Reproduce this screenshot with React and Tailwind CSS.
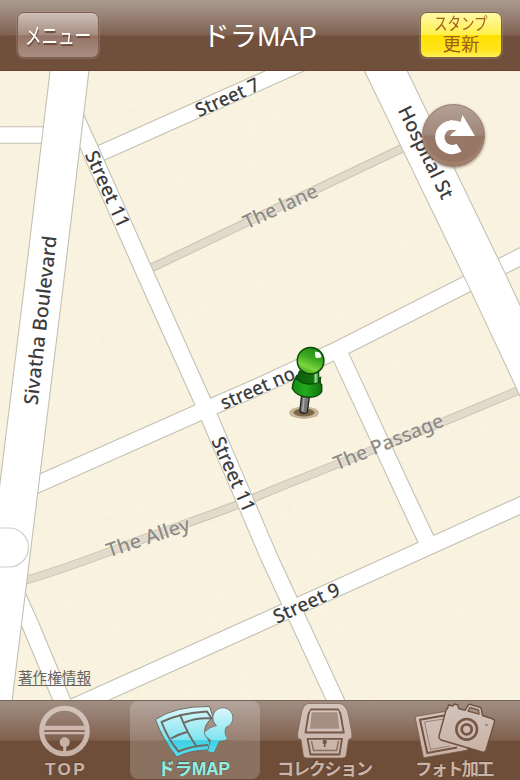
import clsx from 'clsx';

const jp = "font-['Liberation_Sans','Noto_Sans_CJK_JP',sans-serif]";

const ALLEYS = [
  'M148 269.5 L408 145.5',
  'M16 583 Q60 571 140 540 L225 509.5 Q250 500 270 491 L380 447 Q420 432 530 385.5',
];

const STREETS = [
  // side road on the left
  { d: 'M-10 135 H50', w: 16.5 },
  // Street 11
  { d: 'M69 103 L89.5 148 L148 280 L202 400 L240 489 L269 557 L341 712', w: 17 },
  // street no
  { d: 'M20 492 L38 484 L200 412 L262 385 L333 352 L400 318 L462 286.5 L540 247', w: 16.8 },
  { d: 'M335 344 L342.5 360 L407 499 L432 552', w: 17 },
  // Street 9
  { d: 'M60 713 L260 623 L530 501', w: 16.6 },
  { d: 'M4 566 L11 582 L30.5 625 L68 715', w: 17 },
];

const AVENUES = [
  { d: 'M71.4 55 L44.5 280 L-8.5 710', w: 38.5 },
  { d: 'M373.3 45 L487 280 L560 436', w: 38.4 },
];

const LABELS = [
  { text: 'Street 7', x: 199, y: 117.5, angle: -24, len: 68 },
  { text: 'Street 11', x: 84.5, y: 154.5, angle: 65.6, len: 82 },
  { text: 'Sivatha Boulevard', x: 37.5, y: 405.5, angle: -83.5, len: 170 },
  { text: 'The lane', x: 247, y: 229.5, angle: -25, len: 80, muted: true },
  { text: 'Hospital St', x: 397.5, y: 110, angle: 63.8, len: 101 },
  { text: 'street no', x: 224, y: 410, angle: -23.5, len: 79 },
  { text: 'Street 11', x: 211, y: 440.5, angle: 66, len: 80 },
  { text: 'The Alley', x: 109, y: 557.5, angle: -18.5, len: 87, muted: true },
  { text: 'The Passage', x: 337, y: 470.5, angle: -22.5, len: 117, muted: true },
  { text: 'Street 9', x: 277, y: 624, angle: -24.5, len: 71 },
];

const Roads = ({ roads }) => (
  <g fill="none" strokeLinejoin="round">
    {roads.map((r) => (
      <path key={r.d} d={r.d} stroke="#c4c0b3" strokeWidth={r.w + 1.2} />
    ))}
    {roads.map((r) => (
      <path key={r.d} d={r.d} stroke="#fff" strokeWidth={r.w - 1} />
    ))}
  </g>
);

const Pin = () => (
  <g>
    <ellipse cx="304" cy="412.7" rx="14.8" ry="6.2" fill="#c8b59a" />
    <ellipse cx="304" cy="412.5" rx="10.5" ry="4" fill="#7d6548" />
    <path d="M301.5 396 L299.8 411.5 Q303 415 307.2 412.5 L309.5 396 Z" fill="#777" stroke="#222" strokeWidth="1.3" />
    <path d="M304 398 L302.8 411" stroke="#aaa" strokeWidth="1.5" />
    <path d="M297 375.5 Q308 384 320.5 377.5 Q319.5 384 321.7 385 V391.5 Q319 397.3 309 397.2 Q297 397 292.3 388.5 Q292.500 382 297 375.5 Z" fill="url(#pinBody)" stroke="#0b4a09" strokeWidth="1.4" />
    <path d="M299.500 371 L296.500 379 Q306 387 319 382.500 L318.500 370 Z" fill="url(#pinNeck)" stroke="#0b4a09" strokeWidth="1.2" />
    <circle cx="310.6" cy="360.7" r="13.3" fill="url(#pinHead)" stroke="#0b4a09" strokeWidth="1.5" />
    <path d="M315.5 352 L319.5 353 L321 357 L316 357.5 Z" fill="#fff" stroke="#fff" strokeLinejoin="round" />
  </g>
);

const MapView = () => (
  <svg viewBox="0 71 520 629" className="block h-[629px] w-full">
    <defs>
      <linearGradient id="pinHead" x1="0.7" y1="0" x2="0.3" y2="1">
        <stop offset="0" stopColor="#1f8a18" />
        <stop offset="0.4" stopColor="#3fa822" />
        <stop offset="0.75" stopColor="#7bd63a" />
        <stop offset="1" stopColor="#3c9c1e" />
      </linearGradient>
      <linearGradient id="pinBody">
        <stop offset="0" stopColor="#158c14" />
        <stop offset="0.45" stopColor="#23ab1d" />
        <stop offset="1" stopColor="#107310" />
      </linearGradient>
      <linearGradient id="pinNeck">
        <stop offset="0" stopColor="#0f5d0d" />
        <stop offset="0.75" stopColor="#12730f" />
        <stop offset="0.85" stopColor="#a5dc9c" />
        <stop offset="1" stopColor="#157a12" />
      </linearGradient>
      <filter id="paper" x="0" y="0" width="100%" height="100%">
        <feTurbulence type="fractalNoise" baseFrequency="0.14 0.24" numOctaves="2" seed="4" />
        <feColorMatrix values="0 0 0 0 0.74  0 0 0 0 0.66  0 0 0 0 0.38  0.4 0 0 0 -0.13" />
      </filter>
    </defs>
    <rect y="71" width="520" height="629" fill="#f9f3e1" />
    <rect y="71" width="520" height="629" filter="url(#paper)" opacity="0.35" />
    <g fill="none">
      {ALLEYS.map((d) => (
        <path key={d} d={d} stroke="#cbc3b2" strokeWidth="8.8" />
      ))}
      {ALLEYS.map((d) => (
        <path key={d} d={d} stroke="#e2dacb" strokeWidth="6.8" />
      ))}
    </g>
    <Roads roads={[{ d: 'M92 157 L260 82 L330 50.5', w: 16 }]} />
    <Roads roads={STREETS} />
    <Roads roads={AVENUES} />
    <path d="M-5 528 H9 A19.500 19.500 0 0 1 9 567 H-5" fill="#fff" stroke="#cfcdc8" strokeWidth="1.2" />
    <g fontSize="19.5" fontFamily="'Noto Sans', sans-serif" fontWeight="500">
      {LABELS.map((l) => (
        <text
          key={l.text + l.x}
          transform={`translate(${l.x} ${l.y}) rotate(${l.angle})`}
          textLength={l.len}
          lengthAdjust="spacingAndGlyphs"
          fill={l.muted ? '#8d8b86' : '#3d3d3d'}
          stroke={l.muted ? '#faf5e8' : '#fff'}
          strokeWidth="1.6"
          strokeOpacity="0.6"
          paintOrder="stroke"
        >
          {l.text}
        </text>
      ))}
    </g>
    <Pin />
  </svg>
);

const RotateButton = () => (
  <button className="absolute left-[422px] top-[33px] size-[63px] rounded-full border border-[#94796a] bg-linear-to-b from-[#b3a097] via-[#a08778] via-50% to-[#a07e6c] shadow-[0_1px_3px_rgba(90,60,40,0.6)]">
    <svg viewBox="422 104 63 63" className="absolute -left-px -top-px size-[63px]">
      <path d="M423.500 135.500 H484 A30.500 30.500 0 0 1 423.500 135.500" fill="#8a6552" opacity="0.4" />
      <path d="M459 147.500 A12.300 12.300 0 1 1 452 125" fill="none" stroke="#fff" strokeWidth="9.200" />
      <path d="M450 120.300 Q456 120 460.500 122 L462.500 115 L475 136 L450 136 Q453 131 457 130.800 Q453 129 449 130 Z" fill="#fff" />
    </svg>
  </button>
);

const Header = () => (
  <header className="flex h-[71px] items-center justify-between border-b border-[#69402f] bg-[linear-gradient(to_bottom,#a9998f_0,#a18e83_8px,#7f6150_35px,#70503d_36px,#70503b_100%)] pl-[17px] pr-[18px]">
    <button className="flex h-[46px] w-[82px] items-center justify-center rounded-[7px] border border-[#7c5f50] bg-[linear-gradient(to_bottom,#cdc0b9_0,#a58c7f_50%,#947466_52%,#a98f82_100%)] pt-[3px] shadow-[0_0_1px_1px_rgba(190,165,150,0.3)]">
      <span className={clsx(jp, 'scale-x-[0.72] whitespace-nowrap text-[23px] leading-none text-white [text-shadow:1px_2px_1px_#6b4a3a]')}>メニュー</span>
    </button>
    <h1 className={clsx(jp, 'pt-[3px] text-[27.5px] leading-none text-white')}>ドラMAP</h1>
    <button className="flex h-[46px] w-[82px] flex-col items-center justify-center rounded-[7px] border border-[#76653e] bg-[linear-gradient(to_bottom,#fff8a8_0,#fff04e_49%,#ffe100_51%,#ffe51c_85%,#fff15c_100%)] text-[#a0601c] shadow-[0_0_1px_1px_rgba(190,165,150,0.3)]">
      <span className={clsx(jp, 'scale-x-[0.82] whitespace-nowrap text-[16.5px] leading-[19px]')}>スタンプ</span>
      <span className={clsx(jp, 'text-[18.5px] leading-[21px]')}>更新</span>
    </button>
  </header>
);

const TopIcon = () => (
  <g>
    <circle cx="64.5" cy="31" r="22.800" fill="none" stroke="url(#tan)" strokeWidth="5" />
    <path d="M43 25.700 H86 V30 H43 Z M42 32 H87 V34.300 H42 Z" fill="#ccb7ac" />
    <circle cx="64.700" cy="42.300" r="5" fill="#c8b2a7" />
    <path d="M63.200 44 H66.200 V54 H63.200 Z" fill="#c8b2a7" />
  </g>
);

const MapIcon = () => (
  <g stroke="#6d6a64" strokeLinejoin="round">
    <path d="M25.500 19.500 Q45 6 79.500 6.500 L83 17 Q73 25 75 34 L80 43 L78 50 Q60 50 46.700 57 Q33 40 25.500 19.500 Z" fill="url(#cyan)" strokeWidth="1" />
    <g fill="none" strokeWidth="2">
      <path d="M82 19 L77 11.500 Q50 13 31.500 22 Q38 39 48.500 51.5 Q61 46 78 45" />
      <path d="M50 14.500 Q57 33 66.500 46.5 M41 38.500 Q49 34 58.500 31.500 M54.500 22.500 Q67 17.500 81 18.5" />
    </g>
    <path d="M86.500 25.500 A10 10 0 1 1 96 27.300 Q93.500 33 97.500 38.500 Q96 41 89.500 41.300 L84 53 L77.500 51.500 L80.500 40 Q74.500 37 74 32.500 Q80 26.500 86.500 25.500 Z" fill="url(#cyan)" strokeWidth="0.8" />
  </g>
);

const ChestIcon = () => (
  <g fill="url(#tan)" strokeLinejoin="round">
    <path d="M48 3.500 H80 Q86 5 88 13 L91.800 33 V38 L88.500 39.500 L86 56 Q85 58 82 58 H47 Q44 58 43.500 56 L41 39.500 L37.700 38 V33 L41.500 13 Q43 5 48 3.500 Z" stroke="#765b4c" strokeWidth="0.600" />
    <path d="M51 9.5 H78 L80.500 14 L83.800 32.500 H45.500 L48.500 14 Z" fill="none" stroke="#785949" strokeWidth="1.800" />
    <path d="M51 11.500 L49 29.500 H80.300 L78 11.500 Z" fill="#a58f83" stroke="#d3c4bc" strokeWidth="1.600" />
    <path d="M47.500 38.800 H82 L79.500 54.500 H50.500 Z" fill="none" stroke="#765645" strokeWidth="1.800" />
    <path d="M51.500 41 L53.500 50.500 H76.500 L78.500 41" fill="none" stroke="#8d6f5f" strokeWidth="1.400" />
    <circle cx="64.700" cy="42" r="2.200" fill="#765645" />
    <path d="M64.700 42 V47" stroke="#765645" strokeWidth="1.600" />
  </g>
);

const PhotoIcon = () => (
  <g strokeLinejoin="round">
    <path d="M25 16.500 L58 11 L78 50 L33.500 57.800 Z" fill="url(#tan)" stroke="#77594a" strokeWidth="0.800" />
    <path d="M54 15.500 L30 19.800 L37.300 53 L67 47.500" fill="none" stroke="#735443" strokeWidth="2" />
    <path d="M54 19 L34.500 22 L40.500 49.500 L60 46" fill="none" stroke="#8d7061" strokeWidth="0.800" />
    <path d="M57.500 8.500 L58.500 5 L63 6 L64 4 L68 5 L68.500 8.500 L75 10.300 L79 4.200 L91 7.500 L92.500 15.500 L103 19 Q105 20 104.500 22 L96 50 Q95 53 92 52 L51 40 Q48.500 38.500 49 36 L56 10 Z" fill="url(#tan)" stroke="#70503f" strokeWidth="1.400" />
    <path d="M78 11 L80 7.500 L88.500 10 L89 14.200 Z" fill="#a99488" stroke="#765848" strokeWidth="1.400" />
    <circle cx="76.700" cy="29.300" r="10.300" fill="none" stroke="#775746" strokeWidth="2.600" />
    <circle cx="76.700" cy="29.300" r="5" fill="none" stroke="#775746" strokeWidth="2.800" />
    <circle cx="96.500" cy="25" r="1.300" fill="#9c8071" />
  </g>
);

const TABS = [
  { label: 'TOP', icon: TopIcon, text: 'text-[17px] tracking-[2.5px] pl-[2px]' },
  { label: 'ドラMAP', icon: MapIcon, text: 'text-[17.5px] tracking-[-0.4px] pr-[3px]', active: true },
  { label: 'コレクション', icon: ChestIcon, text: 'text-[17px] tracking-[-1.2px] pr-[1px]' },
  { label: 'フォト加工', icon: PhotoIcon, text: 'text-[17px] tracking-[-1.5px] pr-[2px]' },
];

const TabBar = () => (
  <nav className="grid h-20 grid-cols-4 border-t border-[#796453] bg-[linear-gradient(to_bottom,#a08d82_0,#9d897d_5px,#80614f_39px,#6f4e39_40px,#6f4e39_100%)]">
    {TABS.map(({ label, icon: Icon, text, active }) => (
      <button
        key={label}
        className={clsx(
          'flex h-[78px] flex-col items-center rounded-lg',
          active ? 'bg-white/20 text-[#93eee0] [text-shadow:-1px_-1px_0_#4d5a50]' : 'text-[#c9b4a9] [text-shadow:-1px_-1px_0_#5d3d2d]'
        )}
      >
        <svg viewBox="0 1 130 58" className="block h-[58px] w-[130px] shrink-0">
          <defs>
            <linearGradient id="tan" x1="0" y1="0" x2="0" y2="1">
              <stop offset="0" stopColor="#d3c4bc" />
              <stop offset="1" stopColor="#c8b1a5" />
            </linearGradient>
            <linearGradient id="cyan" gradientUnits="userSpaceOnUse" x1="0" y1="4" x2="0" y2="58">
              <stop offset="0" stopColor="#e6fafc" />
              <stop offset="0.66" stopColor="#7fe3f0" />
              <stop offset="0.68" stopColor="#3fd0e4" />
              <stop offset="1" stopColor="#5cdeee" />
            </linearGradient>
          </defs>
          <Icon />
        </svg>
        <span className={clsx(jp, 'whitespace-nowrap pt-px font-bold leading-[19px]', text)}>{label}</span>
      </button>
    ))}
  </nav>
);

export default function App() {
  return (
    <div className="flex h-[780px] w-[520px] flex-col overflow-hidden bg-[#70503b]">
      <Header />
      <main className="relative h-[629px]">
        <MapView />
        <RotateButton />
        <a className="absolute bottom-[14px] left-[18px] font-['Noto_Sans_CJK_JP',sans-serif] text-[14.600px] leading-[18px] text-[#66635d] underline underline-offset-2">
          著作権情報
        </a>
      </main>
      <TabBar />
    </div>
  );
}
